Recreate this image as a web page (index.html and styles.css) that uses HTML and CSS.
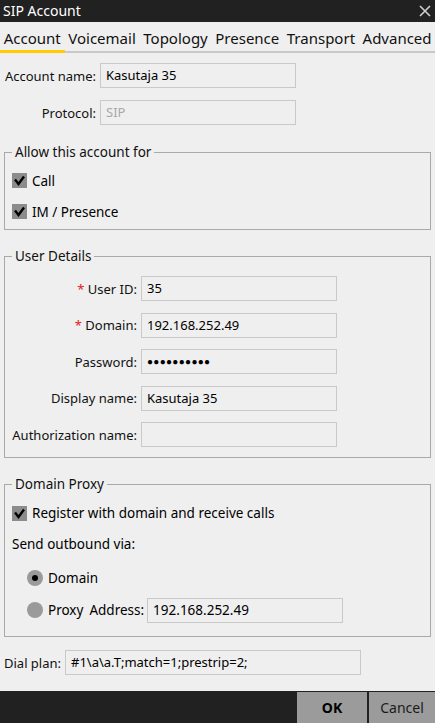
FILE: index.html
```html
<!DOCTYPE html>
<html>
<head>
<meta charset="utf-8">
<link rel="stylesheet" href="styles.css">
</head>
<body>
<div class="window">
  <div class="titlebar">
    <span class="title">SIP Account</span>
    <svg class="close" width="12" height="12" viewBox="0 0 12 12"><path d="M1 1L11 11M11 1L1 11" stroke="#cfcfcf" stroke-width="1.6" fill="none"/></svg>
  </div>
  <div class="tabs">
    <span class="tab active">Account</span>
    <span class="tab">Voicemail</span>
    <span class="tab">Topology</span>
    <span class="tab">Presence</span>
    <span class="tab">Transport</span>
    <span class="tab">Advanced</span>
  </div>
  <div class="content">
    <div class="top-form">
      <label class="lbl">Account name:</label>
      <div class="field">Kasutaja 35</div>
      <label class="lbl">Protocol:</label>
      <div class="field disabled">SIP</div>
    </div>

    <fieldset class="group allow">
      <legend>Allow this account for</legend>
      <div class="check-row"><span class="checkbox"><svg width="15" height="15" viewBox="0 0 15 15"><path d="M3 6.5L6.5 11L12 3.5" stroke="#000" stroke-width="2.4" fill="none"/></svg></span>Call</div>
      <div class="check-row"><span class="checkbox"><svg width="15" height="15" viewBox="0 0 15 15"><path d="M3 6.5L6.5 11L12 3.5" stroke="#000" stroke-width="2.4" fill="none"/></svg></span>IM / Presence</div>
    </fieldset>

    <fieldset class="group user">
      <legend>User Details</legend>
      <div class="user-form">
        <label class="lbl"><span class="req">*</span> User ID:</label>
        <div class="field">35</div>
        <label class="lbl"><span class="req">*</span> Domain:</label>
        <div class="field">192.168.252.49</div>
        <label class="lbl">Password:</label>
        <div class="field dots">●●●●●●●●●●</div>
        <label class="lbl">Display name:</label>
        <div class="field">Kasutaja 35</div>
        <label class="lbl">Authorization name:</label>
        <div class="field"></div>
      </div>
    </fieldset>

    <fieldset class="group proxy">
      <legend>Domain Proxy</legend>
      <div class="check-row reg"><span class="checkbox"><svg width="15" height="15" viewBox="0 0 15 15"><path d="M3 6.5L6.5 11L12 3.5" stroke="#000" stroke-width="2.4" fill="none"/></svg></span>Register with domain and receive calls</div>
      <div class="send-row">Send outbound via:</div>
      <div class="radio-row first"><span class="radio on"></span>Domain</div>
      <div class="radio-row second"><span class="radio"></span><span class="proxy-lbl">Proxy</span><span class="addr-lbl">Address:</span><div class="field addr">192.168.252.49</div></div>
    </fieldset>

    <div class="dial-row">
      <label class="dial-lbl">Dial plan:</label>
      <div class="field dial">#1\a\a.T;match=1;prestrip=2;</div>
    </div>
  </div>
  <div class="footer">
    <button class="btn ok">OK</button>
    <button class="btn cancel">Cancel</button>
  </div>
</div>
</body>
</html>
```

FILE: styles.css
```css
* { box-sizing: border-box; }
html, body { margin: 0; padding: 0; }
body {
  background: #efefef;
  font-family: "Noto Sans", "Open Sans", sans-serif;
  font-size: 13px;
  color: #000;
}
.window {
  width: 435px;
  height: 723px;
  display: flex;
  flex-direction: column;
  overflow: hidden;
}
.titlebar {
  height: 22px;
  background: #212121;
  color: #fff;
  display: flex;
  align-items: center;
  justify-content: space-between;
  padding: 0 4px 0 3px;
  font-size: 14px;
}
.title { line-height: 22px; }
.close { margin-top: -1px; }
.tabs {
  height: 31px;
  display: flex;
  padding-left: 0;
  border-bottom: 2px solid #c8c8c8;
}
.tab {
  height: 31px;
  margin-bottom: -2px;
  padding: 7px 3.75px 0;
  border-bottom: 3px solid transparent;
  font-size: 15px;
  line-height: 18px;
  color: #111;
}
.tab.active { border-bottom-color: #ffcc00; }
.content {
  display: flex;
  flex-direction: column;
  padding: 10px 4px 0;
}
.top-form {
  display: grid;
  grid-template-columns: 92px 196px;
  column-gap: 4px;
  row-gap: 12px;
  align-items: center;
}
.lbl {
  text-align: right;
  white-space: nowrap;
  color: #111;
}
.req { color: #e02020; }
.field {
  height: 25px;
  border: 1px solid #c9c9c9;
  background: #efefef;
  padding: 0 5px;
  line-height: 23px;
  white-space: nowrap;
  overflow: hidden;
}
.field.disabled { color: #a8a8a8; }
.field.dots { font-size: 10px; letter-spacing: 0.3px; }
.group {
  margin: 0;
  border: 1px solid #a9a9a9;
  padding: 0 7px;
  min-width: 0;
}
.group legend {
  padding: 0 3px;
  line-height: 18px;
  font-size: 13.5px;
  color: #111;
}
.allow { margin-top: 18px; padding-top: 4px; padding-bottom: 2px; }
.check-row {
  height: 31px;
  display: flex;
  align-items: center;
  gap: 5px;
  font-size: 13.5px;
}
.checkbox {
  width: 15px;
  height: 15px;
  background: #8c8c8c;
  display: inline-block;
  flex: none;
}
.checkbox svg { display: block; }
.user { margin-top: 17px; padding-top: 11px; padding-bottom: 10px; }
.user-form {
  display: grid;
  grid-template-columns: 125px 196px;
  column-gap: 4px;
  row-gap: 11.5px;
  align-items: center;
}
.proxy { margin-top: 17px; padding-top: 4px; padding-bottom: 13px; }
.check-row.reg { height: 32px; }
.send-row {
  height: 30px;
  display: flex;
  align-items: center;
  font-size: 13.5px;
}
.radio-row {
  display: flex;
  align-items: center;
  padding-left: 15px;
  font-size: 13.5px;
}
.radio-row.first { height: 38px; }
.radio-row.second { height: 26px; }
.radio {
  width: 16px;
  height: 16px;
  border-radius: 50%;
  background: #9a9a9a;
  margin-right: 5px;
  flex: none;
  display: flex;
  align-items: center;
  justify-content: center;
}
.radio.on::after {
  content: "";
  width: 6px;
  height: 6px;
  border-radius: 50%;
  background: #000;
}
.proxy-lbl { margin-right: 6px; }
.addr-lbl { margin-right: 3px; }
.field.addr { width: 196px; }
.dial-row {
  margin-top: 13px;
  display: flex;
  align-items: center;
  gap: 4px;
}
.dial-lbl { color: #111; font-size: 13px; width: 57px; white-space: nowrap; }
.field.dial { width: 296px; }
.footer {
  margin-top: auto;
  height: 32px;
  background: #212121;
  padding-top: 1px;
  display: flex;
  justify-content: flex-end;
  gap: 2px;
}
.btn {
  border: none;
  background: #9b9b9b;
  font-family: "Noto Sans", "Open Sans", sans-serif;
  font-size: 14px;
  color: #1a1a1a;
  padding: 0;
  height: 31px;
}
.btn.ok { width: 70px; font-weight: bold; color: #000; }
.btn.cancel { width: 66px; }
```
